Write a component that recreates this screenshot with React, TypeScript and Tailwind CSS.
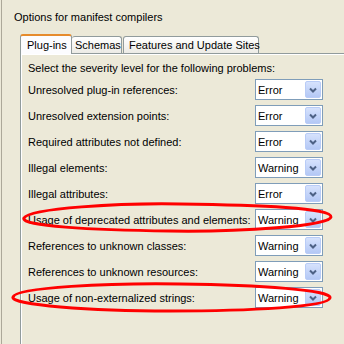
import React from 'react';

const rows = [
  { label: 'Unresolved plug-in references:', value: 'Error' },
  { label: 'Unresolved extension points:', value: 'Error' },
  { label: 'Required attributes not defined:', value: 'Error' },
  { label: 'Illegal elements:', value: 'Warning' },
  { label: 'Illegal attributes:', value: 'Error' },
  { label: 'Usage of deprecated attributes and elements:', value: 'Warning' },
  { label: 'References to unknown classes:', value: 'Warning' },
  { label: 'References to unknown resources:', value: 'Warning' },
  { label: 'Usage of non-externalized strings:', value: 'Warning' },
];

function Combo({ value }: { value: string }) {
  return (
    <div className="w-[68px] h-[21px] border border-[#7F9DB9] bg-white flex items-center">
      <span className="flex-1 pl-[2px] leading-[14px]">{value}</span>
      <div className="w-[16px] h-[17px] mr-px rounded-[2px] border border-[#B9CCF7] bg-gradient-to-b from-[#D6E2FD] to-[#B4C8F5] flex items-center justify-center">
        <svg width="8" height="6" viewBox="0 0 8 6">
          <path d="M1 1.5 L4 4.5 L7 1.5" fill="none" stroke="#4D6185" strokeWidth="2" />
        </svg>
      </div>
    </div>
  );
}

export default function App() {
  return (
    <div className="relative w-[344px] h-[344px] overflow-hidden bg-[#ECE9D8] text-[11px] text-black font-['Liberation_Sans',sans-serif]">
      <div className="h-full ml-px border-l border-[#ACA899] flex flex-col">
        <div className="h-[34px] pt-[10px] pl-[12px] leading-[14px]">Options for manifest compilers</div>

        <div className="ml-[18px] h-[19px] flex items-end whitespace-nowrap">
          <div className="relative z-10 -mb-px w-[52px] h-[20px] bg-[#FCFCFE] border-x border-[#919B9C] rounded-t-[3px] border-t-2 border-t-[#E68B2C] pl-[6px] pt-[2px] leading-[14px]">
            Plug-ins
          </div>
          <div className="w-[50px] h-[17px] bg-gradient-to-b from-white to-[#ECEBE6] border-t border-r border-[#919B9C] rounded-t-[3px] pl-[3px] pt-px leading-[14px]">
            Schemas
          </div>
          <div className="ml-px w-[136px] h-[17px] bg-gradient-to-b from-white to-[#ECEBE6] border-t border-x border-[#919B9C] rounded-t-[3px] pl-[5px] pt-px leading-[14px]">
            Features and Update Sites
          </div>
        </div>

        <div className="ml-[18px] flex-1 border-t border-l border-[#919B9C] shadow-[inset_1px_1px_0_#fff] pl-[7px] pt-[7px]">
          <div className="leading-[14px]">Select the severity level for the following problems:</div>
          <div className="mt-[4px] flex flex-col gap-[5px]">
            {rows.map((r) => (
              <div key={r.label} className="flex items-center h-[21px]">
                <span className="w-[227px] shrink-0 leading-[14px] whitespace-nowrap">{r.label}</span>
                <Combo value={r.value} />
              </div>
            ))}
          </div>
        </div>
      </div>

      <svg className="absolute inset-0 pointer-events-none" width="344" height="344" viewBox="0 0 344 344">
        <path
          d="M24 218 C 30 208, 120 203, 180 204 C 260 205, 332 208, 331 217 C 330 226, 240 232, 170 231 C 90 230, 20 226, 24 218 Z"
          fill="none"
          stroke="#FF0000"
          strokeWidth="3"
        />
        <path
          d="M13 297 C 16 287, 110 283, 180 284 C 260 285, 332 290, 330 298 C 328 307, 250 311, 170 311 C 90 311, 10 305, 13 297 Z"
          fill="none"
          stroke="#FF0000"
          strokeWidth="3"
        />
      </svg>
    </div>
  );
}
